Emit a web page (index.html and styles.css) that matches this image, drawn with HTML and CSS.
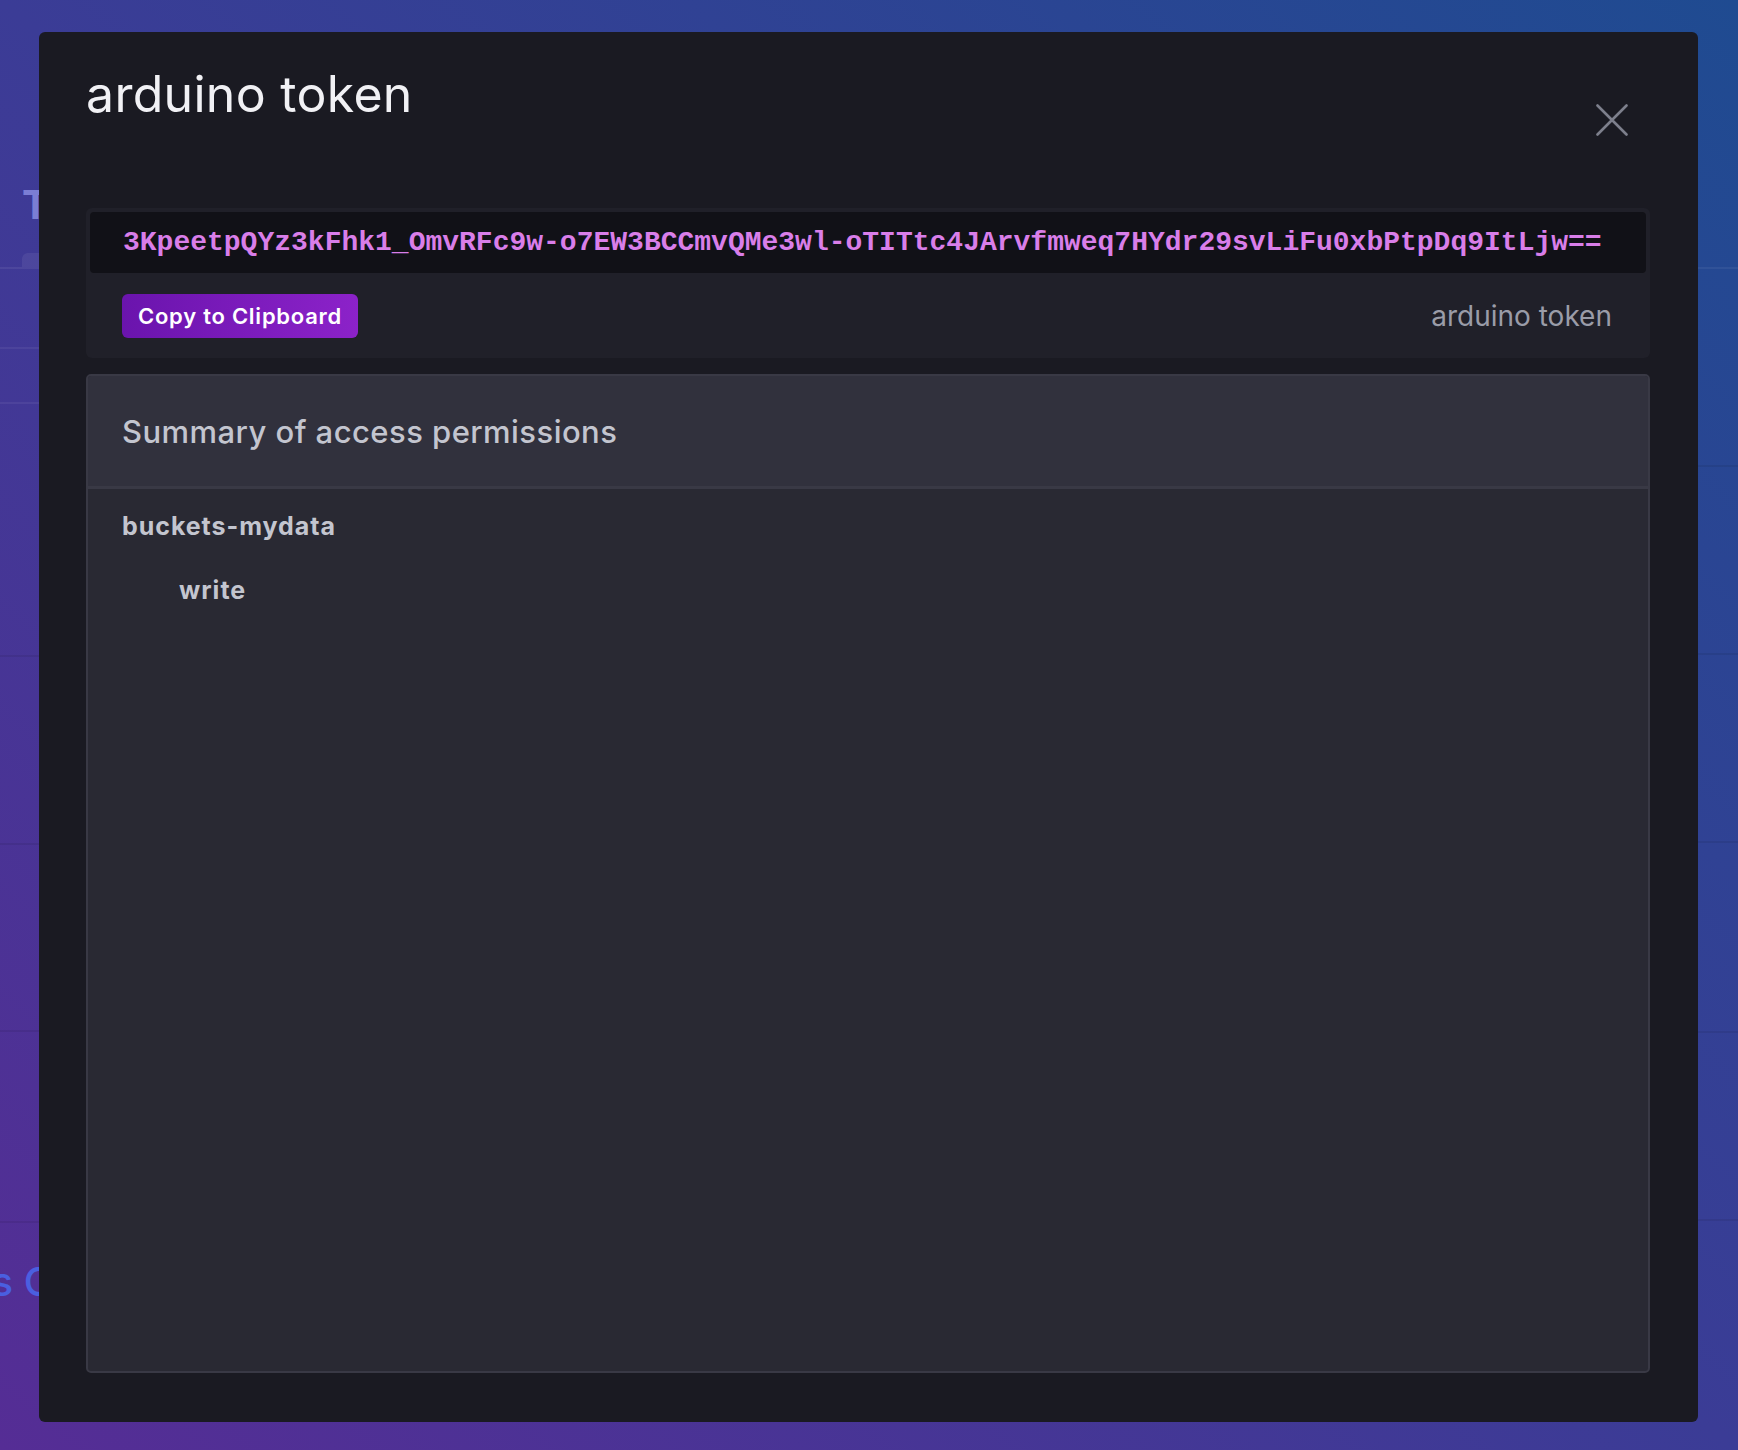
FILE: index.html
```html
<!DOCTYPE html>
<html lang="en">
<head>
<meta charset="utf-8">
<title>arduino token</title>
<link rel="stylesheet" href="styles.css">
</head>
<body>
  <div class="backdrop">
    <div class="strip strip-left">
      <div class="bg-head"><span class="bg-title">Tokens</span></div>
      <div class="bg-tabs"><span class="bg-tab"></span></div>
      <div class="bg-row light h80"></div>
      <div class="bg-row light h55"></div>
      <div class="bg-row dark h253"></div>
      <div class="bg-row dark h188"></div>
      <div class="bg-row dark h187"></div>
      <div class="bg-row dark h191"></div>
      <div class="bg-link">Telegraf Plugins Client Libraries</div>
    </div>
    <div class="strip strip-right">
      <div class="bg-row light h269"></div>
      <div class="bg-row dark h198"></div>
      <div class="bg-row dark h188"></div>
      <div class="bg-row dark h188"></div>
      <div class="bg-row dark h190"></div>
      <div class="bg-row dark h188"></div>
    </div>
  </div>

  <div class="overlay">
    <div class="modal">
      <div class="modal-header">
        <h1 class="modal-title">arduino token</h1>
        <button class="close-btn" aria-label="Close">
          <svg width="32" height="32" viewBox="0 0 32 32"><path d="M1.5 1.5 L30.5 30.5 M30.5 1.5 L1.5 30.5" stroke="#7d7f8c" stroke-width="2.6" stroke-linecap="round" fill="none"/></svg>
        </button>
      </div>

      <div class="token-panel">
        <div class="token-box">3KpeetpQYz3kFhk1_OmvRFc9w-o7EW3BCCmvQMe3wl-oTITtc4JArvfmweq7HYdr29svLiFu0xbPtpDq9ItLjw==</div>
        <div class="token-actions">
          <button class="copy-btn">Copy to Clipboard</button>
          <span class="token-desc">arduino token</span>
        </div>
      </div>

      <div class="summary">
        <div class="summary-header">Summary of access permissions</div>
        <div class="summary-body">
          <div class="perm-resource">buckets-mydata</div>
          <div class="perm-action">write</div>
        </div>
      </div>
    </div>
  </div>
</body>
</html>
```

FILE: styles.css
```css
* { box-sizing: border-box; }

html, body {
  margin: 0;
  padding: 0;
}

body {
  width: 1738px;
  height: 1450px;
  overflow: hidden;
  position: relative;
  font-family: "Inter", "Noto Sans", "Liberation Sans", sans-serif;
  background: linear-gradient(to top right, #552d95 0%, #3b3c96 50%, #1f4b91 100%);
}

/* dimmed page behind the modal */
.backdrop {
  display: flex;
  justify-content: space-between;
  height: 100%;
}

.strip {
  display: flex;
  flex-direction: column;
  overflow: hidden;
}

.strip-left { width: 39px; }
.strip-right { width: 40px; }

.bg-head {
  height: 253px;
  padding: 180px 0 0 22px;
}

.bg-title {
  font-size: 40px;
  font-weight: 700;
  color: #7b7ed4;
  white-space: nowrap;
}

.bg-tabs {
  height: 16px;
  padding-left: 22px;
  border-bottom: 2px solid rgba(255, 255, 255, 0.07);
}

.bg-tab {
  display: block;
  width: 40px;
  height: 14px;
  border-radius: 6px 6px 0 0;
  background: rgba(255, 255, 255, 0.07);
}

.bg-row { flex: none; }
.bg-row.light { border-bottom: 2px solid rgba(255, 255, 255, 0.06); }
.bg-row.dark { border-bottom: 2px solid rgba(0, 0, 0, 0.07); }

.h55 { height: 55px; }
.h80 { height: 80px; }
.h187 { height: 187px; }
.h188 { height: 188px; }
.h190 { height: 190px; }
.h191 { height: 191px; }
.h198 { height: 198px; }
.h253 { height: 253px; }
.h269 { height: 269px; }

.bg-link {
  padding-top: 34px;
  font-size: 40px;
  font-weight: 500;
  color: #4a5fe0;
  white-space: nowrap;
  text-indent: -296px;
}

/* modal */
.overlay {
  position: absolute;
  inset: 0;
}

.modal {
  position: absolute;
  left: 39px;
  top: 32px;
  width: 1659px;
  height: 1390px;
  background: #1a1a22;
  border-radius: 6px;
  display: flex;
  flex-direction: column;
  padding: 0 48px 49px 47px;
}

.modal-header {
  display: flex;
  justify-content: space-between;
  align-items: flex-start;
  height: 176px;
}

.modal-title {
  margin: 32px 0 0 0;
  font-size: 50px;
  line-height: 60px;
  font-weight: 400;
  color: #f1f1f5;
  letter-spacing: 0.3px;
}

.close-btn {
  margin: 72px 22px 0 0;
  padding: 0;
  width: 32px;
  height: 32px;
  border: none;
  background: none;
  display: block;
}

.close-btn svg { display: block; }

.token-panel {
  background: #202029;
  border-radius: 6px;
  padding: 4px;
  flex: none;
}

.token-box {
  height: 61px;
  line-height: 61px;
  background: #111117;
  border-radius: 4px;
  padding-left: 33px;
  font-family: "Liberation Mono", "Courier New", monospace;
  font-weight: 700;
  font-size: 28px;
  color: #d97ee9;
  white-space: nowrap;
  overflow: hidden;
}

.token-actions {
  display: flex;
  justify-content: space-between;
  align-items: center;
  height: 81px;
  padding: 5px 34px 0 32px;
}

.copy-btn {
  height: 44px;
  padding: 0 16px;
  border: none;
  border-radius: 6px;
  background: linear-gradient(to right, #6a14ad, #8c22c9);
  color: #ffffff;
  font-family: inherit;
  font-size: 22px;
  font-weight: 600;
  letter-spacing: 0.75px;
}

.token-desc {
  font-size: 28px;
  color: #9a9ca8;
}

.summary {
  margin-top: 16px;
  flex: 1;
  border: 2px solid #393945;
  border-radius: 5px;
  background: #292933;
  display: flex;
  flex-direction: column;
}

.summary-header {
  height: 113px;
  padding: 37px 34px 0 34px;
  background: #31313d;
  border-bottom: 3px solid #393945;
  border-radius: 3px 3px 0 0;
  font-size: 31px;
  line-height: 38px;
  font-weight: 500;
  color: #c3c5cf;
  letter-spacing: 0.45px;
}

.summary-body {
  padding: 22px 34px;
}

.perm-resource {
  font-size: 25px;
  line-height: 30px;
  font-weight: 700;
  color: #c3c5cf;
  letter-spacing: 0.95px;
}

.perm-action {
  margin-top: 34px;
  padding-left: 57px;
  font-size: 25px;
  line-height: 30px;
  font-weight: 700;
  color: #c3c5cf;
  letter-spacing: 1px;
}
```
